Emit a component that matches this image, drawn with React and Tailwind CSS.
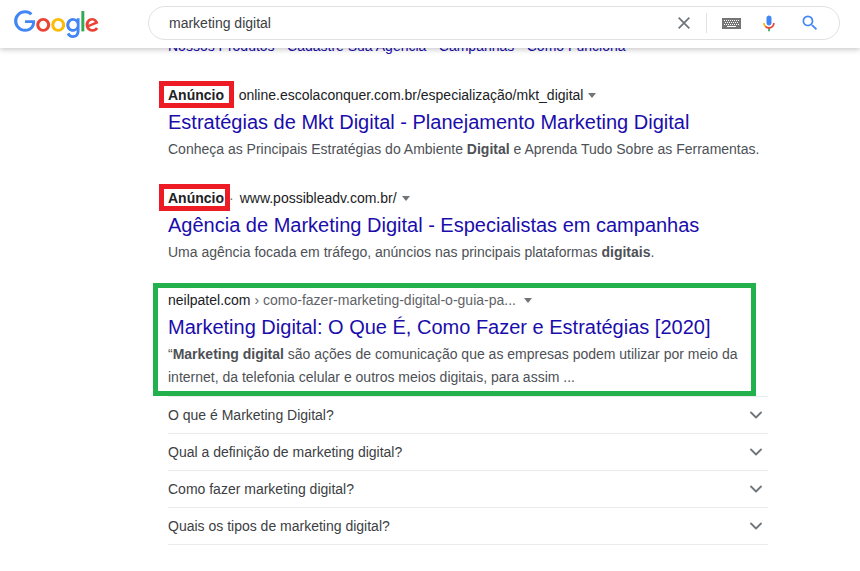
import React from "react";
import { ChevronDown } from "lucide-react";

const questions = [
  "O que é Marketing Digital?",
  "Qual a definição de marketing digital?",
  "Como fazer marketing digital?",
  "Quais os tipos de marketing digital?",
];

function GoogleLogo() {
  return (
    <svg viewBox="0 0 272 92" className="w-[85px] h-[29px] shrink-0">
      <path fill="#EA4335" d="M115.75 47.18c0 12.77-9.99 22.18-22.25 22.18s-22.25-9.41-22.25-22.18C71.25 34.32 81.24 25 93.5 25s22.25 9.32 22.25 22.18zm-9.74 0c0-7.98-5.79-13.44-12.51-13.44S80.99 39.2 80.99 47.18c0 7.9 5.79 13.44 12.51 13.44s12.51-5.55 12.51-13.44z" />
      <path fill="#FBBC05" d="M163.75 47.18c0 12.77-9.99 22.18-22.25 22.18s-22.25-9.41-22.25-22.18c0-12.85 9.99-22.18 22.25-22.18s22.25 9.32 22.25 22.18zm-9.74 0c0-7.98-5.79-13.44-12.51-13.44s-12.51 5.46-12.51 13.44c0 7.9 5.79 13.44 12.51 13.44s12.51-5.55 12.51-13.44z" />
      <path fill="#4285F4" d="M209.75 26.34v39.82c0 16.38-9.66 23.07-21.08 23.07-10.75 0-17.22-7.19-19.66-13.07l8.48-3.53c1.51 3.61 5.21 7.87 11.17 7.87 7.31 0 11.84-4.51 11.84-13v-3.19h-.34c-2.18 2.69-6.38 5.04-11.68 5.04-11.09 0-21.25-9.66-21.25-22.09 0-12.52 10.16-22.26 21.25-22.26 5.29 0 9.49 2.35 11.68 4.96h.34v-3.61h9.25zm-8.56 20.92c0-7.81-5.21-13.52-11.84-13.52-6.72 0-12.35 5.71-12.35 13.52 0 7.73 5.63 13.36 12.35 13.36 6.63 0 11.84-5.63 11.84-13.36z" />
      <path fill="#34A853" d="M225 3v65h-9.5V3h9.5z" />
      <path fill="#EA4335" d="M262.02 54.48l7.56 5.04c-2.44 3.61-8.32 9.83-18.48 9.83-12.6 0-22.01-9.74-22.01-22.18 0-13.19 9.49-22.18 20.92-22.18 11.51 0 17.14 9.16 18.98 14.11l1.01 2.52-29.65 12.28c2.27 4.45 5.8 6.72 10.75 6.72 4.96 0 8.4-2.44 10.92-6.14zm-23.27-7.98l19.82-8.23c-1.09-2.77-4.37-4.7-8.23-4.7-4.95 0-11.84 4.37-11.59 12.93z" />
      <path fill="#4285F4" d="M35.29 41.41V32H67c.31 1.64.47 3.58.47 5.68 0 7.06-1.93 15.79-8.15 22.01-6.05 6.3-13.78 9.66-24.02 9.66C16.32 69.35.36 53.89.36 34.91.36 15.93 16.32.47 35.3.47c10.5 0 17.98 4.12 23.6 9.49l-6.64 6.64c-4.03-3.78-9.49-6.72-16.97-6.72-13.86 0-24.7 11.17-24.7 25.03 0 13.86 10.84 25.03 24.7 25.03 8.99 0 14.11-3.61 17.39-6.89 2.66-2.66 4.41-6.46 5.1-11.65l-22.49.01z" />
    </svg>
  );
}

function KeyboardIcon() {
  return (
    <svg viewBox="0 0 19 11" className="w-[19px] h-[11px]">
      <path fill="#757575" d="M0 0h19v11H0z" />
      <path fill="#fff" d="M2 2h1v1H2zM4 2h1v1H4zM6 2h1v1H6zM8 2h1v1H8zM10 2h1v1h-1zM12 2h1v1h-1zM14 2h1v1h-1zM16 2h1v1h-1zM3 4h1v1H3zM5 4h1v1H5zM7 4h1v1H7zM9 4h1v1H9zM11 4h1v1h-1zM13 4h1v1h-1zM15 4h1v1h-1zM2 6h1v1H2zM4 6h1v1H4zM6 6h1v1H6zM8 6h1v1H8zM10 6h1v1h-1zM12 6h1v1h-1zM14 6h1v1h-1zM16 6h1v1h-1zM5 8h9v1H5z" />
    </svg>
  );
}

function MicIcon() {
  return (
    <svg viewBox="0 0 24 24" className="w-[20px] h-[20px]">
      <path fill="#4285F4" d="M12 15c1.66 0 3-1.31 3-2.97V6c0-1.66-1.34-3-3-3S9 4.34 9 6v6.03C9 13.69 10.34 15 12 15z" />
      <path fill="#34A853" d="M11 18.08h2V22h-2z" />
      <path fill="#FBBC05" d="M7.05 16.87c-1.27-1.33-2.05-2.83-2.05-4.87h2c0 1.45.56 2.42 1.47 3.38l-1.42 1.49z" />
      <path fill="#EA4335" d="M12 16.93c-1.3 0-2.67-.55-3.53-1.55l-1.42 1.49C8.36 18.24 10.08 19 12 19c3.87 0 6.82-3.13 6.82-7h-2c0 2.76-2.06 4.93-4.82 4.93z" />
    </svg>
  );
}

function SearchIcon() {
  return (
    <svg viewBox="0 0 24 24" className="w-[20px] h-[20px]">
      <path fill="#4285F4" d="M15.5 14h-.79l-.28-.27A6.471 6.471 0 0 0 16 9.5 6.5 6.5 0 1 0 9.5 16c1.61 0 3.09-.59 4.23-1.57l.27.28v.79l5 4.99L20.49 19l-4.99-5zm-6 0C7.01 14 5 11.99 5 9.5S7.01 5 9.5 5 14 7.01 14 9.5 11.99 14 9.5 14z" />
    </svg>
  );
}

function Caret() {
  return (
    <span className="block w-0 h-0 border-x-[4.5px] border-x-transparent border-t-[5px] border-t-[#70757a]" />
  );
}

function AdLine({ url, boxClass, dotClass }) {
  return (
    <div className="flex items-center h-[20px] text-sm text-[#202124]">
      <span className="relative font-bold">
        Anúncio
        <span className={`absolute border-[5px] border-[#ed1c24] ${boxClass}`} />
      </span>
      <span className={`text-[#70757a] ${dotClass}`}>·</span>
      <span>{url}</span>
      <span className="ml-[5px] flex">
        <Caret />
      </span>
    </div>
  );
}

function Title({ children }) {
  return (
    <h3 className="text-[20px] leading-[26px] mt-[4px] text-[#1a0dab] whitespace-nowrap">
      {children}
    </h3>
  );
}

export default function App() {
  return (
    <div className="h-[571px] overflow-hidden bg-white font-['Liberation_Sans',Arial,sans-serif]">
      <header className="relative z-10 h-[48px] bg-white shadow-[0_2px_5px_rgba(0,0,0,0.2)] flex items-center pl-[14px] pr-[20px]">
        <GoogleLogo />
        <div className="ml-[49px] mb-[2px] flex-1 h-[34px] rounded-full border border-[#dfe1e5] flex items-center pl-[20px] pr-[19px]">
          <span className="flex-1 text-sm text-[#3c4043]">marketing digital</span>
          <svg viewBox="0 0 24 24" className="w-[16px] h-[16px]" fill="none" stroke="#70757a" strokeWidth="2.6">
            <path d="M4 4l16 16M20 4L4 20" />
          </svg>
          <span className="w-px h-[20px] bg-[#dfe1e5] ml-[14px] mr-[15px]" />
          <KeyboardIcon />
          <span className="ml-[18px] mr-[21px] flex"><MicIcon /></span>
          <SearchIcon />
        </div>
      </header>

      <main className="w-[600px] ml-[168px] -mt-[12px]">
        <div className="text-sm leading-[20px] text-[#1a0dab] whitespace-nowrap">
          Nossos Produtos · Cadastre Sua Agência · Campanhas · Como Funciona
        </div>

        <section className="mt-[29px]">
          <AdLine url="online.escolaconquer.com.br/especialização/mkt_digital" boxClass="-left-[9px] -right-[10px] -top-[4px] -bottom-[3px]" dotClass="mx-[5px]" />
          <Title>Estratégias de Mkt Digital - Planejamento Marketing Digital</Title>
          <p className="mt-[4px] text-sm leading-[20px] text-[#4d5156] whitespace-nowrap">
            Conheça as Principais Estratégias do Ambiente <b>Digital</b> e Aprenda Tudo Sobre as Ferramentas.
          </p>
        </section>

        <section className="mt-[29px]">
          <AdLine url="www.possibleadv.com.br/" boxClass="-left-[9px] -right-[6px] -top-[4px] -bottom-[3px]" dotClass="ml-[5px] mr-[6px]" />
          <Title>Agência de Marketing Digital - Especialistas em campanhas</Title>
          <p className="mt-[4px] text-sm leading-[20px] text-[#4d5156] whitespace-nowrap">
            Uma agência focada em tráfego, anúncios nas principais plataformas <b>digitais</b>.
          </p>
        </section>

        <section className="relative mt-[28px]">
          <div className="absolute -left-[15px] top-[-7px] w-[603px] h-[113px] border-[5px] border-[#22b14c]" />
          <div className="flex items-center h-[20px] text-sm">
            <span className="text-[#202124]">neilpatel.com</span>
            <span className="text-[#5f6368] ml-[4px]">› como-fazer-marketing-digital-o-guia-pa...</span>
            <span className="ml-[8px] flex"><Caret /></span>
          </div>
          <Title>Marketing Digital: O Que É, Como Fazer e Estratégias [2020]</Title>
          <p className="mt-[3px] text-sm leading-[23px] text-[#4d5156] w-[590px]">
            “<b>Marketing digital</b> são ações de comunicação que as empresas podem utilizar por meio da internet, da telefonia celular e outros meios digitais, para assim ...
          </p>
        </section>

        <ul className="mt-[7px] border-t border-[#ebebeb]">
          {questions.map((q) => (
            <li key={q} className="h-[37px] border-b border-[#ebebeb] flex items-center justify-between text-sm text-[#3c4043]">
              <span>{q}</span>
              <ChevronDown size={20} strokeWidth={2.2} className="text-[#70757a] mr-[2px]" />
            </li>
          ))}
        </ul>
      </main>
    </div>
  );
}
